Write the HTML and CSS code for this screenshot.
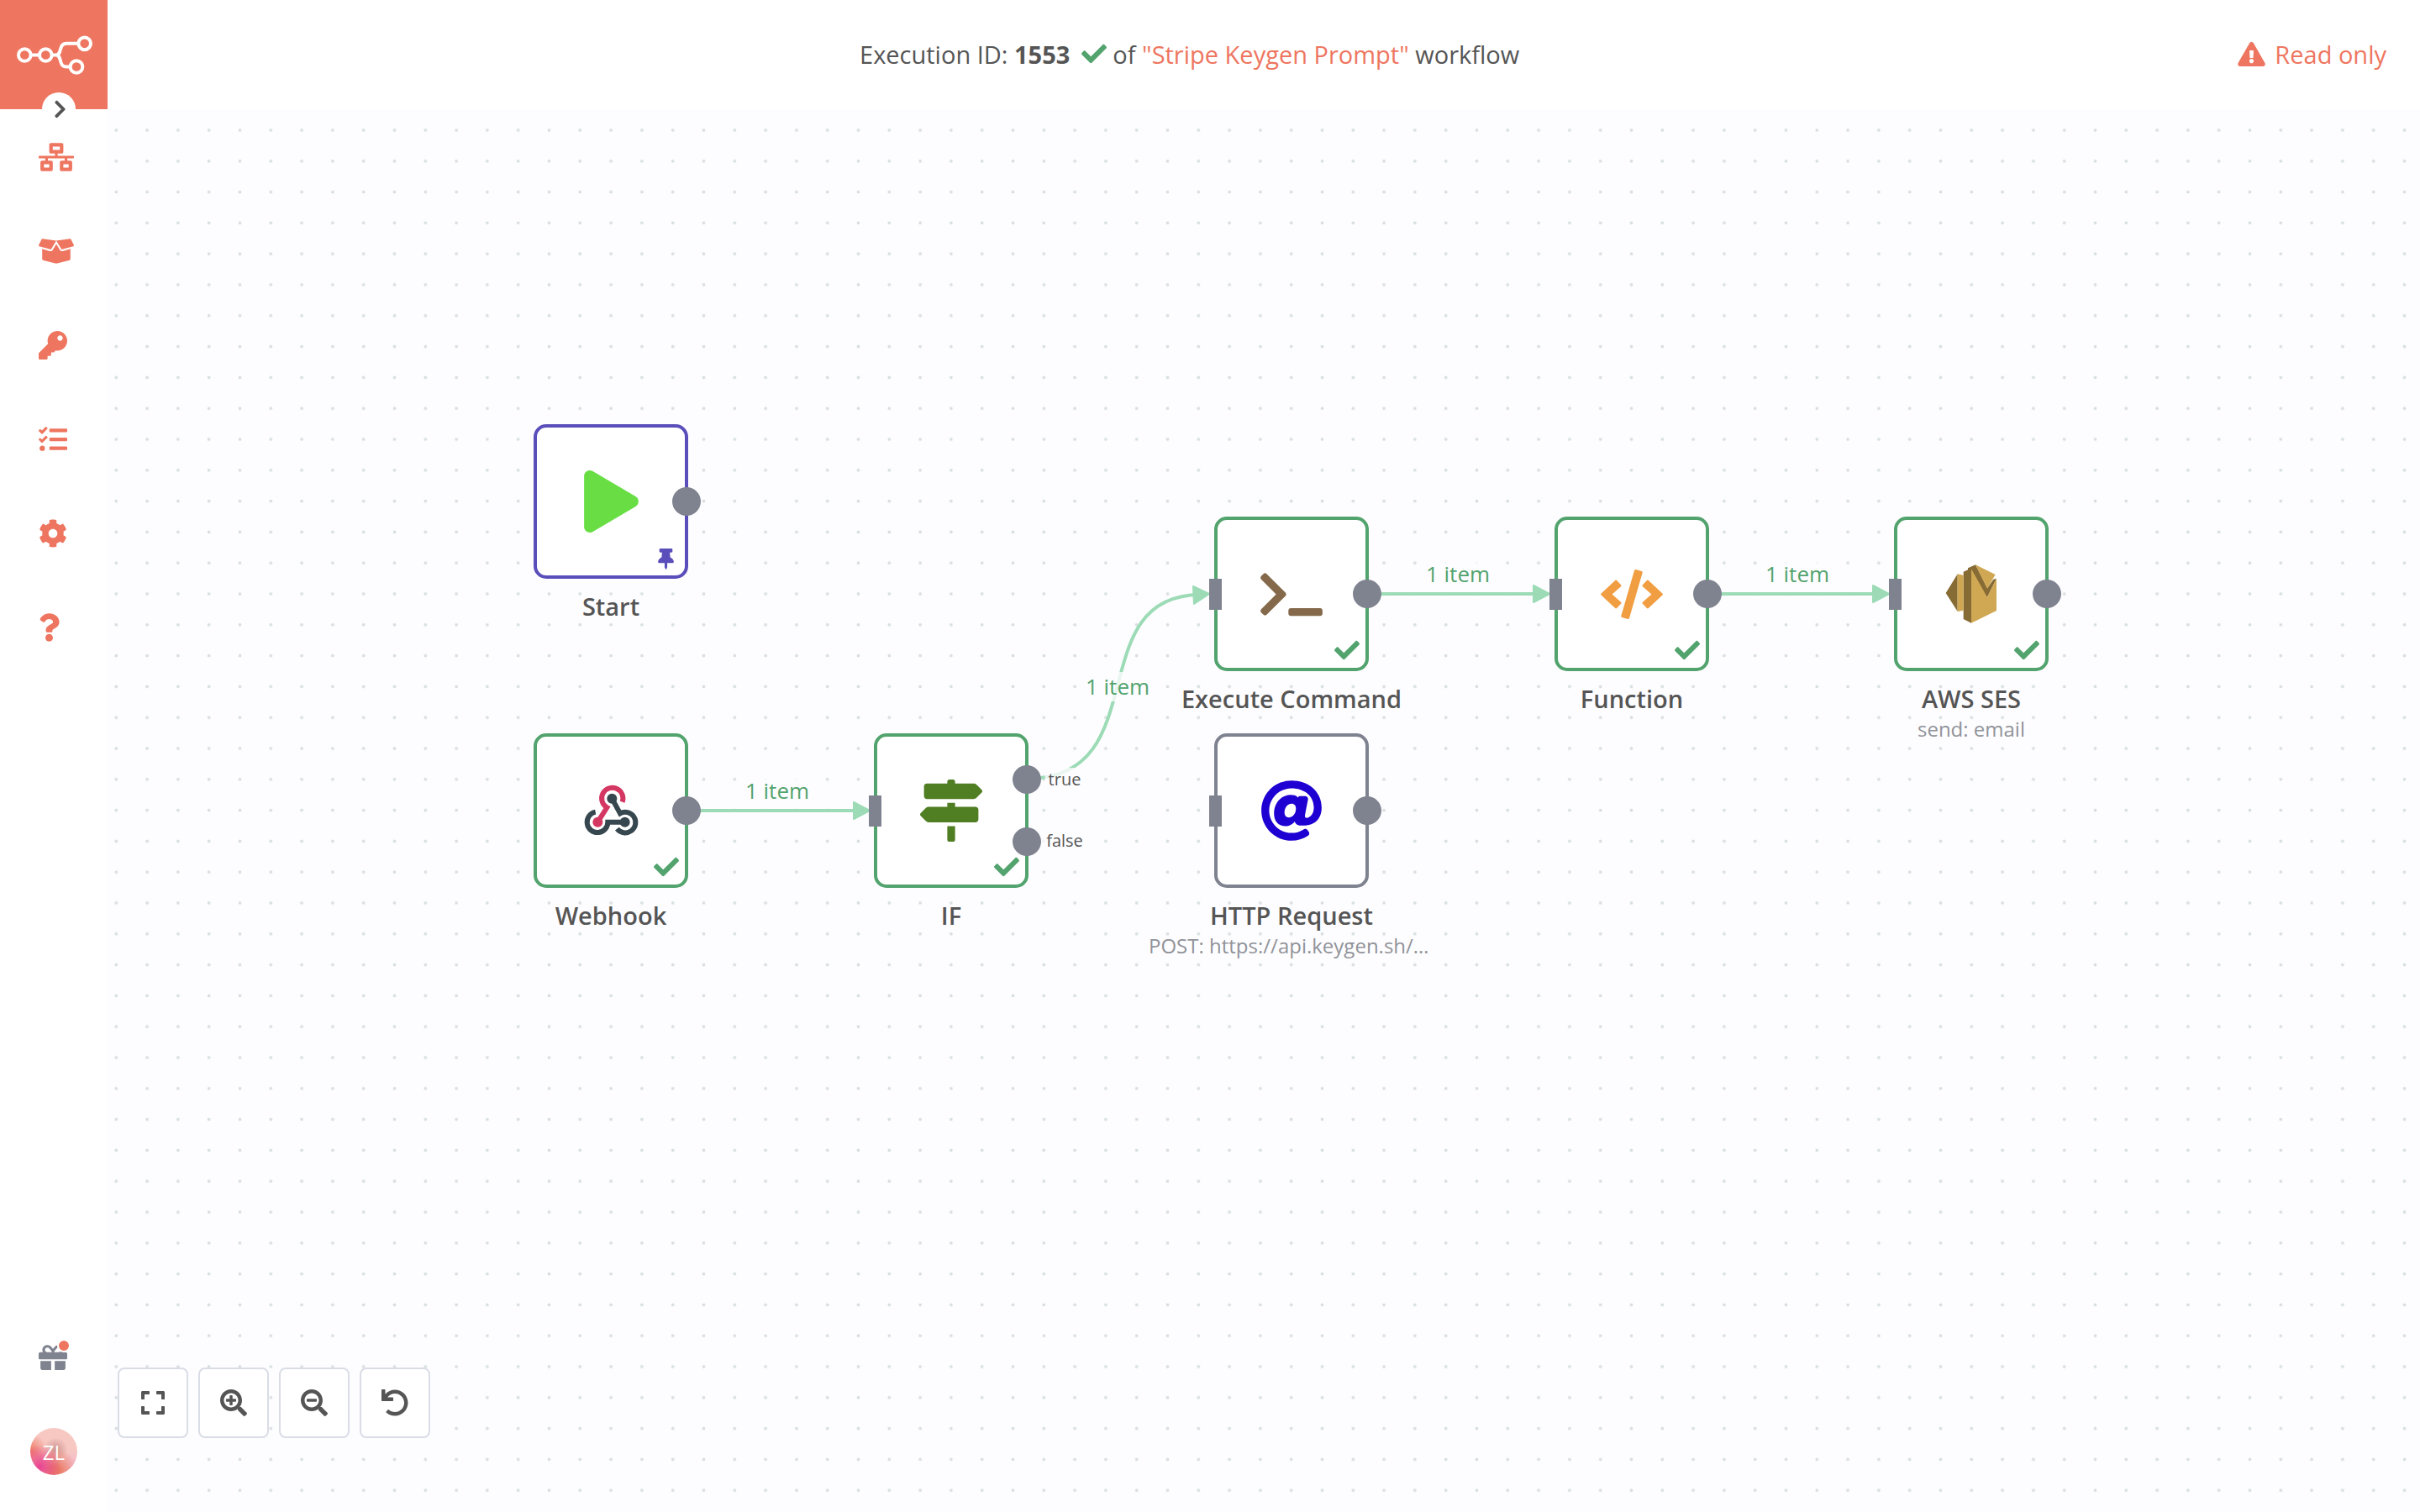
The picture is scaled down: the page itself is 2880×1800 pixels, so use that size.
FILE: index.html
```html
<!DOCTYPE html>
<html lang="en">
<head>
<meta charset="utf-8">
<title>Execution 1553 - Stripe Keygen Prompt</title>
<link rel="stylesheet" href="styles.css">
</head>
<body>
<svg class="sprite" aria-hidden="true">
  <symbol id="check" viewBox="0 0 512 512"><path d="M173.898 439.404l-166.4-166.4c-9.997-9.997-9.997-26.206 0-36.204l36.203-36.204c9.997-9.998 26.207-9.998 36.204 0L192 312.69 432.095 72.596c9.997-9.997 26.207-9.997 36.204 0l36.203 36.204c9.997 9.997 9.997 26.206 0 36.204l-294.4 294.401c-9.998 9.997-26.207 9.997-36.204-.001z"/></symbol>
</svg>

<aside class="sidebar">
  <a class="logo" href="#" aria-label="Home">
    <svg width="90" height="47" viewBox="60 125 270 140" fill="none" stroke="#fff" stroke-width="12">
      <circle cx="88" cy="195" r="22"/><circle cx="163" cy="195" r="22"/><circle cx="302" cy="154" r="22"/><circle cx="273" cy="237" r="22"/>
      <path d="M110 195h31M185 195h14C224 195 206 154 238 154H280M199 195C224 195 206 237 238 237H251"/>
    </svg>
  </a>
  <button class="toggle" type="button" aria-label="Expand menu">
    <svg width="15" height="24" viewBox="0 0 320 512"><path d="M285.476 272.971L91.132 467.314c-9.373 9.373-24.569 9.373-33.941 0l-22.667-22.667c-9.357-9.357-9.375-24.522-.04-33.901L188.505 256 34.484 101.255c-9.335-9.379-9.317-24.544.04-33.901l22.667-22.667c9.373-9.373 24.569-9.373 33.941 0L285.475 239.03c9.373 9.372 9.373 24.568.001 33.941z"/></svg>
  </button>
  <nav class="menu menu-top">
    <a href="#" aria-label="Workflows"><svg width="42" height="34" viewBox="0 0 640 512"><path d="M640 264v-16c0-8.84-7.16-16-16-16H344v-40h72c17.67 0 32-14.33 32-32V32c0-17.67-14.33-32-32-32H224c-17.67 0-32 14.33-32 32v128c0 17.67 14.33 32 32 32h72v40H16c-8.84 0-16 7.16-16 16v16c0 8.84 7.16 16 16 16h104v40H64c-17.67 0-32 14.33-32 32v128c0 17.67 14.33 32 32 32h160c17.67 0 32-14.33 32-32V352c0-17.67-14.33-32-32-32h-56v-40h304v40h-56c-17.67 0-32 14.33-32 32v128c0 17.67 14.33 32 32 32h160c17.67 0 32-14.33 32-32V352c0-17.67-14.33-32-32-32h-56v-40h104c8.84 0 16-7.16 16-16zM256 128V64h128v64H256zm-64 320H96v-64h96v64zm352 0h-96v-64h96v64z"/></svg></a>
    <a href="#" aria-label="Templates"><svg width="42" height="34" viewBox="0 0 640 512"><path d="M425.7 256c-16.9 0-32.8-9-41.4-23.4L320 126l-64.2 106.6c-8.7 14.5-24.6 23.5-41.5 23.5-4.5 0-9-.6-13.3-1.9L64 215v178c0 14.7 10 27.5 24.2 31l216.2 54.1c10.2 2.5 20.9 2.5 31 0L551.8 424c14.2-3.6 24.2-16.4 24.2-31V215l-137 39.1c-4.3 1.3-8.8 1.9-13.3 1.9zm212.6-112.2L586.8 41c-3.1-6.2-9.8-9.8-16.7-8.9L320 64l91.7 152.1c3.8 6.3 11.4 9.3 18.5 7.3l197.9-56.5c9.9-2.9 14.7-13.9 10.2-23.1zM53.2 41L1.7 143.8c-4.6 9.2.3 20.2 10.1 23l197.9 56.5c7.1 2 14.7-1 18.5-7.3L320 64 69.8 32.1c-6.9-.8-13.5 2.7-16.6 8.9z"/></svg></a>
    <a href="#" aria-label="Credentials"><svg width="34" height="34" viewBox="0 0 512 512"><path d="M512 176.001C512 273.203 433.202 352 336 352c-11.22 0-22.19-1.062-32.827-3.069l-24.012 27.014A23.999 23.999 0 0 1 261.223 384H224v40c0 13.255-10.745 24-24 24h-40v40c0 13.255-10.745 24-24 24H24c-13.255 0-24-10.745-24-24v-78.059c0-6.365 2.529-12.47 7.029-16.971l161.802-161.802C163.108 213.814 160 195.271 160 176 160 78.798 238.797.001 335.999 0 433.488-.001 512 78.511 512 176.001zM336 128c0 26.51 21.49 48 48 48s48-21.49 48-48-21.49-48-48-48-48 21.49-48 48z"/></svg></a>
    <a href="#" aria-label="Executions"><svg width="34" height="34" viewBox="0 0 512 512"><path d="M139.61 35.5a12 12 0 0 0-17 0L58.93 98.81l-22.7-22.12a12 12 0 0 0-17 0L3.53 92.41a12 12 0 0 0 0 17l47.59 47.4a12.78 12.78 0 0 0 17.61 0l15.59-15.62L156.52 69a12.09 12.09 0 0 0 .09-17zm0 159.19a12 12 0 0 0-17 0l-63.68 63.72-22.7-22.1a12 12 0 0 0-17 0L3.53 252a12 12 0 0 0 0 17L51 316.5a12.77 12.77 0 0 0 17.6 0l15.7-15.69 72.2-72.22a12 12 0 0 0 .09-16.9zM64 368c-26.49 0-48.59 21.5-48.59 48S37.53 464 64 464a48 48 0 0 0 0-96zm432 16H208a16 16 0 0 0-16 16v32a16 16 0 0 0 16 16h288a16 16 0 0 0 16-16v-32a16 16 0 0 0-16-16zm0-320H208a16 16 0 0 0-16 16v32a16 16 0 0 0 16 16h288a16 16 0 0 0 16-16V80a16 16 0 0 0-16-16zm0 160H208a16 16 0 0 0-16 16v32a16 16 0 0 0 16 16h288a16 16 0 0 0 16-16v-32a16 16 0 0 0-16-16z"/></svg></a>
    <a href="#" aria-label="Settings"><svg width="34" height="34" viewBox="0 0 512 512"><path d="M487.4 315.7l-42.6-24.6c4.3-23.2 4.3-47 0-70.2l42.6-24.6c4.9-2.8 7.1-8.6 5.5-14-11.1-35.6-30-67.8-54.7-94.6-3.8-4.1-10-5.1-14.8-2.3L380.8 110c-17.9-15.4-38.5-27.3-60.8-35.1V25.8c0-5.6-3.9-10.5-9.4-11.7-36.7-8.2-74.3-7.8-109.2 0-5.5 1.2-9.4 6.1-9.4 11.7V75c-22.2 7.9-42.8 19.8-60.8 35.1L88.7 85.5c-4.9-2.8-11-1.9-14.8 2.3-24.7 26.7-43.6 58.9-54.7 94.6-1.7 5.4.6 11.2 5.5 14L67.3 221c-4.3 23.2-4.3 47 0 70.2l-42.6 24.6c-4.9 2.8-7.1 8.6-5.5 14 11.1 35.6 30 67.8 54.7 94.6 3.8 4.1 10 5.1 14.8 2.3l42.6-24.6c17.9 15.4 38.5 27.3 60.8 35.1v49.2c0 5.6 3.9 10.5 9.4 11.7 36.7 8.2 74.3 7.8 109.2 0 5.5-1.2 9.4-6.1 9.4-11.7v-49.2c22.2-7.9 42.8-19.8 60.8-35.1l42.6 24.6c4.9 2.8 11 1.9 14.8-2.3 24.7-26.7 43.6-58.9 54.7-94.6 1.5-5.5-.7-11.3-5.6-14.1zM256 336c-44.1 0-80-35.9-80-80s35.9-80 80-80 80 35.9 80 80-35.9 80-80 80z"/></svg></a>
    <a href="#" aria-label="Help"><svg width="25" height="34" viewBox="0 0 384 512"><path d="M202.021 0C122.202 0 70.503 32.703 29.914 91.026c-7.363 10.58-5.093 25.086 5.178 32.874l43.138 32.709c10.373 7.865 25.132 6.026 33.253-4.148 25.049-31.381 43.63-49.449 82.757-49.449 30.764 0 68.816 19.799 68.816 49.631 0 22.552-18.617 34.134-48.993 51.164-35.423 19.86-82.299 44.576-82.299 106.405V320c0 13.255 10.745 24 24 24h72.471c13.255 0 24-10.745 24-24v-5.773c0-42.86 125.268-44.645 125.268-160.627C377.504 66.256 286.902 0 202.021 0zM192 373.459c-38.196 0-69.271 31.075-69.271 69.271 0 38.195 31.075 69.27 69.271 69.27s69.271-31.075 69.271-69.271-31.075-69.27-69.271-69.27z"/></svg></a>
  </nav>
  <div class="menu menu-bottom">
    <a class="gift" href="#" aria-label="What's new"><span class="gift-icon"><svg width="34" height="34" viewBox="0 0 512 512"><path d="M32 448c0 17.7 14.3 32 32 32h160V320H32v128zm256 32h160c17.7 0 32-14.3 32-32V320H288v160zm192-320h-42.1c6.2-12.1 10.1-25.5 10.1-40 0-48.5-39.5-88-88-88-41.6 0-68.5 21.3-103 68.3-34.5-47-61.4-68.3-103-68.3-48.5 0-88 39.5-88 88 0 14.5 3.8 27.9 10.1 40H32c-17.7 0-32 14.3-32 32v80c0 8.8 7.2 16 16 16h480c8.8 0 16-7.2 16-16v-80c0-17.7-14.3-32-32-32zm-326.1 0c-22.1 0-40-17.9-40-40s17.9-40 40-40c19.9 0 34.6 3.3 86.1 80h-86.1zm206.1 0h-86.1c51.4-76.5 65.7-80 86.1-80 22.1 0 40 17.9 40 40s-17.9 40-40 40z"/></svg><span class="badge"></span></span></a>
    <a class="user" href="#"><span class="avatar">ZL</span></a>
  </div>
</aside>

<div class="page">
  <header class="topbar">
    <h1 class="title"><span>Execution ID: <strong>1553</strong></span><svg class="ok" width="30" height="30"><use href="#check"/></svg><span>of <a href="#">"Stripe Keygen Prompt"</a> workflow</span></h1>
    <span class="readonly"><svg width="33" height="29" viewBox="0 0 576 512"><path d="M569.517 440.013C587.975 472.007 564.806 512 527.94 512H48.054c-36.937 0-59.999-40.055-41.577-71.987L246.423 23.985c18.467-32.009 64.72-31.951 83.154 0l239.94 416.028zM288 354c-25.405 0-46 20.595-46 46s20.595 46 46 46 46-20.595 46-46-20.595-46-46-46zm-43.673-165.346l7.418 136c.347 6.364 5.609 11.346 11.982 11.346h48.546c6.373 0 11.635-4.982 11.982-11.346l7.418-136c.375-6.874-5.098-12.654-11.982-12.654h-63.383c-6.884 0-12.356 5.78-11.981 12.654z"/></svg>Read only</span>
  </header>

  <main class="canvas">
    <svg class="layer" aria-hidden="true">
      <defs>
        <pattern id="dots" width="40" height="40" patternUnits="userSpaceOnUse" patternTransform="translate(-8.1 6.6) scale(.92)"><rect x="18.1" y="18.1" width="3.8" height="3.8" rx="1" fill="#d9dfe0"/></pattern>
      </defs>
      <rect width="100%" height="100%" fill="url(#dots)"/>
      <g fill="none" stroke="#9cdbb6" stroke-width="4">
        <path d="M689 835H892"/>
        <path d="M1499 577H1701"/>
        <path d="M1904 577H2106"/>
        <path d="M1094 797C1249 797 1157 579 1300 578"/>
      </g>
      <g fill="#9cdbb6" stroke="#9cdbb6" stroke-width="2" stroke-linejoin="round">
        <path d="M888 825v20l19-10z"/>
        <path d="M1697 567v20l19-10z"/>
        <path d="M2101 567v20l19-10z"/>
        <path d="M1292 568l1 21 18-12z"/>
      </g>
    </svg>

    <span class="items items-webhook">1 item</span>
    <span class="items items-if">1 item</span>
    <span class="items items-command">1 item</span>
    <span class="items items-function">1 item</span>
    <span class="branch branch-true">true</span>
    <span class="branch branch-false">false</span>

    <section class="node node-start">
      <div class="box pinned">
        <svg width="65" height="74" viewBox="0 0 448 512" fill="#68de44"><path d="M424.4 214.7L72.4 6.6C43.8-10.3 0 6.1 0 47.9V464c0 37.5 40.7 60.1 72.4 41.3l352-208c31.4-18.5 31.5-64.1 0-82.6z"/></svg>
        <svg class="pin" width="19" height="25" viewBox="0 0 384 512"><path d="M298.028 214.267L285.793 96H328c13.255 0 24-10.745 24-24V24c0-13.255-10.745-24-24-24H56C42.745 0 32 10.745 32 24v48c0 13.255 10.745 24 24 24h42.207L85.972 214.267C37.465 236.82 0 277.261 0 328c0 13.255 10.745 24 24 24h136v104.007c0 1.242.289 2.467.845 3.578l24 48c2.941 5.882 11.364 5.893 14.311 0l24-48a8.008 8.008 0 0 0 .845-3.578V352h136c13.255 0 24-10.745 24-24-.001-51.167-37.983-91.42-85.973-113.733z"/></svg>
        <i class="out"></i>
      </div>
      <h2>Start</h2>
    </section>

    <section class="node node-webhook">
      <div class="box done">
        <svg width="74" height="74" viewBox="270 235 222 222" fill="none" stroke-width="18">
          <g stroke="#37474f"><path d="M326 351A37 37 0 1 0 370 387H431"/><path d="M385 303L414 356A37 37 0 1 1 403 411"/></g>
          <path stroke="#d53763" d="M422 315A38 38 0 1 0 367 335L334 387"/>
          <g fill="#37474f"><circle cx="385" cy="303" r="18"/><circle cx="431" cy="387" r="18"/></g><circle cx="334" cy="387" r="18" fill="#d53763"/>
        </svg>
        <svg class="tick" width="30" height="30"><use href="#check"/></svg>
        <i class="out"></i>
      </div>
      <h2>Webhook</h2>
    </section>

    <section class="node node-if">
      <div class="box done">
        <svg width="74" height="74" viewBox="0 0 512 512" fill="#507e23"><path d="M507.31 84.69L464 41.37c-6-6-14.14-9.37-22.63-9.37H288V16c0-8.84-7.16-16-16-16h-32c-8.84 0-16 7.16-16 16v16H56c-13.25 0-24 10.75-24 24v80c0 13.25 10.75 24 24 24h385.37c8.49 0 16.62-3.37 22.63-9.37l43.31-43.31c6.25-6.26 6.25-16.38 0-22.63zM224 496c0 8.84 7.16 16 16 16h32c8.84 0 16-7.16 16-16V384h-64v112zm232-272H288v-32h-64v32H70.63c-8.49 0-16.62 3.37-22.63 9.37L4.69 276.69c-6.25 6.25-6.25 16.38 0 22.63L48 342.63c6 6 14.14 9.37 22.63 9.37H456c13.25 0 24-10.75 24-24v-80c0-13.25-10.75-24-24-24z"/></svg>
        <svg class="tick" width="30" height="30"><use href="#check"/></svg>
        <i class="in"></i><i class="out out-upper"></i><i class="out out-lower"></i>
      </div>
      <h2>IF</h2>
    </section>

    <section class="node node-command">
      <div class="box done">
        <svg width="74" height="59" viewBox="0 0 640 512" fill="#84694a"><path d="M257.981 272.971L63.638 467.314c-9.373 9.373-24.569 9.373-33.941 0L7.029 444.647c-9.357-9.357-9.375-24.522-.04-33.901L161.011 256 6.99 101.255c-9.335-9.379-9.317-24.544.04-33.901l22.667-22.667c9.373-9.373 24.569-9.373 33.941 0L257.981 239.03c9.373 9.372 9.373 24.568 0 33.941zM640 456v-32c0-13.255-10.745-24-24-24H312c-13.255 0-24 10.745-24 24v32c0 13.255 10.745 24 24 24h304c13.255 0 24-10.745 24-24z"/></svg>
        <svg class="tick" width="30" height="30"><use href="#check"/></svg>
        <i class="in"></i><i class="out"></i>
      </div>
      <h2>Execute Command</h2>
    </section>

    <section class="node node-http">
      <div class="box">
        <svg width="74" height="74" viewBox="0 0 512 512" fill="#1f00d2"><path d="M256 8C118.941 8 8 118.919 8 256c0 137.059 110.919 248 248 248 48.154 0 95.342-14.14 135.408-40.223 12.005-7.815 14.625-24.288 5.552-35.372l-10.177-12.433c-7.671-9.371-21.179-11.667-31.373-5.129C325.92 429.757 291.314 440 256 440c-101.458 0-184-82.542-184-184S154.542 72 256 72c100.139 0 184 57.619 184 160 0 38.786-21.093 79.742-58.17 83.693-17.349-.454-16.91-12.857-13.476-30.024l23.433-121.11C394.653 149.75 383.308 136 368.225 136h-44.981a13.518 13.518 0 0 0-13.432 11.993l-.01.092c-14.697-17.901-40.448-21.775-59.971-21.775-74.58 0-137.831 62.234-137.831 151.46 0 65.303 36.785 105.87 96 105.87 26.984 0 57.369-15.637 74.991-38.333 9.522 34.104 40.613 34.104 70.71 34.104C462.609 379.41 504 307.798 504 232 504 95.653 394.023 8 256 8zm-21.68 304.43c-22.249 0-36.07-15.623-36.07-40.771 0-44.993 30.779-72.729 58.63-72.729 22.292 0 35.601 15.241 35.601 40.77 0 45.061-33.875 72.73-58.161 72.73z"/></svg>
        <i class="in"></i><i class="out"></i>
      </div>
      <h2>HTTP Request</h2>
      <p class="clipped">POST: https://api.keygen.sh/…</p>
    </section>

    <section class="node node-function">
      <div class="box done">
        <svg width="74" height="59" viewBox="0 0 640 512" fill="#f19e43"><path d="M278.9 511.5l-61-17.7c-6.4-1.8-10-8.5-8.2-14.9L346.2 8.7c1.8-6.4 8.5-10 14.9-8.2l61 17.7c6.4 1.8 10 8.5 8.2 14.9L293.8 503.3c-1.9 6.4-8.5 10.1-14.9 8.2zm-114-112.2l43.5-46.4c4.6-4.9 4.3-12.7-.8-17.2L117 256l90.6-79.7c5.1-4.5 5.5-12.3.8-17.2l-43.5-46.4c-4.5-4.8-12.1-5.1-17-.5L3.8 247.2c-5.1 4.7-5.1 12.8 0 17.5l144.1 135.1c4.9 4.6 12.5 4.4 17-.5zm327.2.6l144.1-135.1c5.1-4.7 5.1-12.8 0-17.5L492.1 112.1c-4.8-4.5-12.4-4.3-17 .5L431.6 159c-4.6 4.9-4.3 12.7.8 17.2L523 256l-90.6 79.7c-5.1 4.5-5.5 12.3-.8 17.2l43.5 46.4c4.5 4.9 12.1 5.1 17 .6z"/></svg>
        <svg class="tick" width="30" height="30"><use href="#check"/></svg>
        <i class="in"></i><i class="out"></i>
      </div>
      <h2>Function</h2>
    </section>

    <section class="node node-ses">
      <div class="box done">
        <svg width="74" height="74" viewBox="629 212 222 222">
          <path fill="#876b35" d="M649 320L691 252V386zM712 244L728 237V231L755 219L797 303L819 271L830 268L797 335L760 300L740 427L712 413z"/>
          <path fill="#d0a854" d="M691 252L712 256V382L691 386zM740 234L797 335L830 268V383L740 427zM755 219L826 254L797 304z"/>
        </svg>
        <svg class="tick" width="30" height="30"><use href="#check"/></svg>
        <i class="in"></i><i class="out"></i>
      </div>
      <h2>AWS SES</h2>
      <p>send: email</p>
    </section>

    <div class="zoom">
      <button type="button" aria-label="Zoom to fit"><svg width="28" height="32" viewBox="0 0 448 512"><path d="M0 180V56c0-13.3 10.7-24 24-24h124c6.6 0 12 5.4 12 12v40c0 6.6-5.4 12-12 12H64v84c0 6.6-5.4 12-12 12H12c-6.6 0-12-5.4-12-12zM288 44v40c0 6.6 5.4 12 12 12h84v84c0 6.6 5.4 12 12 12h40c6.6 0 12-5.4 12-12V56c0-13.3-10.7-24-24-24H300c-6.6 0-12 5.4-12 12zm148 276h-40c-6.6 0-12 5.4-12 12v84h-84c-6.6 0-12 5.4-12 12v40c0 6.6 5.4 12 12 12h124c13.3 0 24-10.7 24-24V332c0-6.6-5.4-12-12-12zM160 468v-40c0-6.6-5.4-12-12-12H64v-84c0-6.6-5.4-12-12-12H12c-6.6 0-12 5.4-12 12v124c0 13.3 10.7 24 24 24h124c6.6 0 12-5.4 12-12z"/></svg></button>
      <button type="button" aria-label="Zoom in"><svg width="32" height="32" viewBox="0 0 512 512"><path d="M304 192v32c0 6.6-5.4 12-12 12h-56v56c0 6.6-5.4 12-12 12h-32c-6.6 0-12-5.4-12-12v-56h-56c-6.6 0-12-5.4-12-12v-32c0-6.6 5.4-12 12-12h56v-56c0-6.6 5.4-12 12-12h32c6.6 0 12 5.4 12 12v56h56c6.6 0 12 5.4 12 12zm201 284.7L476.7 505c-9.4 9.4-24.6 9.4-33.9 0L343 405.3c-4.5-4.5-7-10.6-7-17V372c-35.3 27.6-79.7 44-128 44C93.1 416 0 322.9 0 208S93.1 0 208 0s208 93.1 208 208c0 48.3-16.4 92.7-44 128h16.3c6.4 0 12.5 2.5 17 7l99.7 99.7c9.3 9.4 9.3 24.6 0 34zM344 208c0-75.2-60.8-136-136-136S72 132.8 72 208s60.8 136 136 136 136-60.8 136-136z"/></svg></button>
      <button type="button" aria-label="Zoom out"><svg width="32" height="32" viewBox="0 0 512 512"><path d="M304 192v32c0 6.6-5.4 12-12 12H124c-6.6 0-12-5.4-12-12v-32c0-6.6 5.4-12 12-12h168c6.6 0 12 5.4 12 12zm201 284.7L476.7 505c-9.4 9.4-24.6 9.4-33.9 0L343 405.3c-4.5-4.5-7-10.6-7-17V372c-35.3 27.6-79.7 44-128 44C93.1 416 0 322.9 0 208S93.1 0 208 0s208 93.1 208 208c0 48.3-16.4 92.7-44 128h16.3c6.4 0 12.5 2.5 17 7l99.7 99.7c9.3 9.4 9.3 24.6 0 34zM344 208c0-75.2-60.8-136-136-136S72 132.8 72 208s60.8 136 136 136 136-60.8 136-136z"/></svg></button>
      <button type="button" aria-label="Reset zoom"><svg width="32" height="32" viewBox="0 0 512 512"><path d="M212.333 224.333H12c-6.627 0-12-5.373-12-12V12C0 5.373 5.373 0 12 0h48c6.627 0 12 5.373 12 12v78.112C117.773 39.279 184.26 7.47 258.175 8.007c136.906.994 246.448 111.623 246.157 248.532C504.041 393.258 393.12 504 256.333 504c-64.089 0-122.496-24.313-166.51-64.215-5.099-4.622-5.334-12.554-.467-17.42l33.967-33.967c4.474-4.474 11.662-4.717 16.401-.525C170.76 415.336 211.58 432 256.333 432c97.268 0 176-78.716 176-176 0-97.267-78.716-176-176-176-58.496 0-110.28 28.476-142.274 72.333h98.274c6.627 0 12 5.373 12 12v48c0 6.627-5.373 12-12 12z"/></svg></button>
    </div>
  </main>
</div>
</body>
</html>
```
FILE: styles.css
```css
:root {
  --coral: #ee7660;
  --green: #52a36d;
  --gray: #7f838f;
  --purple: #5a4ebb;
  --text: #555;
}

* {
  box-sizing: border-box;
}

body {
  margin: 0;
  min-height: 100vh;
  display: grid;
  grid-template-columns: 128px 1fr;
  font-family: "Open Sans", sans-serif;
  color: var(--text);
  background: #fff;
}

svg {
  display: block;
  fill: currentColor;
}

svg[fill="none"] {
  fill: none;
}

.sprite {
  position: absolute;
  width: 0;
  height: 0;
}

a {
  color: var(--coral);
  text-decoration: none;
}

button {
  padding: 0;
  border: 0;
  background: #fff;
  color: var(--text);
  display: flex;
  align-items: center;
  justify-content: center;
}

/* Sidebar */
.sidebar {
  position: relative;
  display: flex;
  flex-direction: column;
}

.logo {
  height: 130px;
  display: flex;
  align-items: center;
  padding-left: 20px;
  background: var(--coral);
}

.toggle {
  position: absolute;
  left: 50px;
  top: 110px;
  width: 40px;
  height: 40px;
  padding-left: 3px;
  border-radius: 50%;
}

.menu a {
  height: 112px;
  display: flex;
  align-items: center;
  padding-left: 46px;
}

.menu-top {
  padding-top: 1px;
}

.menu-bottom {
  margin-top: auto;
  padding-bottom: 16px;
}

.menu .gift {
  color: var(--gray);
}

.gift-icon {
  position: relative;
}

.badge {
  position: absolute;
  right: -4px;
  top: -5px;
  width: 16px;
  height: 16px;
  border: 2px solid #fff;
  border-radius: 50%;
  background: var(--coral);
}

.menu .user {
  padding-left: 36px;
}

.avatar {
  width: 56px;
  height: 56px;
  border-radius: 50%;
  display: flex;
  align-items: center;
  justify-content: center;
  font-size: 24px;
  color: #fff;
  background:
    radial-gradient(circle at 20% 82%, #e84393 0, #e8439300 40%),
    radial-gradient(circle at 52% 92%, #ea7a66 10%, #ea7a6600 46%),
    radial-gradient(circle at 0 50%, #ee7660 0, #ee766000 34%),
    radial-gradient(circle at 96% 84%, #f2b4cc 0, #f2b4cc00 30%),
    radial-gradient(circle at 54% 46%, #cf9490 0, #f7c8c2 34%);
}

/* Header */
.page {
  display: flex;
  flex-direction: column;
}

.topbar {
  height: 130px;
  display: flex;
  align-items: center;
  padding: 0 40px 2px;
  font-size: 29px;
}

.title {
  flex: 1;
  margin: 0;
  display: flex;
  align-items: center;
  justify-content: center;
  font-size: inherit;
  font-weight: 400;
}

.ok {
  margin: 0 7px 0 14px;
  color: var(--green);
}

.readonly {
  display: flex;
  align-items: center;
  gap: 11px;
  color: var(--coral);
}

/* Canvas */
.canvas {
  position: relative;
  flex: 1;
  overflow: hidden;
  background: #fdfdff;
}

.layer {
  position: absolute;
  inset: 0;
  width: 100%;
  height: 100%;
}

.items,
.branch {
  position: absolute;
  transform: translateX(-50%);
  padding: 0 4px;
  white-space: nowrap;
  background: #fdfdffcc;
}

.items {
  font-size: 26px;
  line-height: 35px;
  color: var(--green);
}

.branch {
  font-size: 20px;
  line-height: 27px;
}

.items-webhook { left: 797px; top: 794px; }
.items-if { left: 1202px; top: 670px; }
.items-command { left: 1607px; top: 536px; }
.items-function { left: 2011px; top: 536px; }
.branch-true { left: 1139px; top: 784px; }
.branch-false { left: 1139px; top: 857px; }

.node {
  position: absolute;
  width: 340px;
  display: flex;
  flex-direction: column;
  align-items: center;
  text-align: center;
}

.node-start { left: 429px; top: 375px; }
.node-webhook { left: 429px; top: 743px; }
.node-if { left: 834px; top: 743px; }
.node-command { left: 1239px; top: 485px; }
.node-http { left: 1239px; top: 743px; }
.node-function { left: 1644px; top: 485px; }
.node-ses { left: 2048px; top: 485px; }

.box {
  position: relative;
  width: 184px;
  height: 184px;
  display: flex;
  align-items: center;
  justify-content: center;
  border: 4px solid var(--gray);
  border-radius: 15px;
  background: #fff;
}

.box > svg[fill]:not([fill="none"]) {
  fill: revert-layer;
}

.done {
  border-color: var(--green);
}

.pinned {
  border-color: var(--purple);
}

.tick {
  position: absolute;
  right: 7px;
  bottom: 6px;
  color: var(--green);
}

.pin {
  position: absolute;
  right: 13px;
  bottom: 7px;
  color: var(--purple);
}

.in,
.out {
  position: absolute;
  background: var(--gray);
}

.in {
  left: -10px;
  top: 70px;
  width: 15px;
  height: 37px;
}

.out {
  right: -19px;
  top: 71px;
  width: 34px;
  height: 34px;
  border-radius: 50%;
}

.out-upper { top: 34px; }
.out-lower { top: 108px; }

.node h2 {
  margin: 13px 0 0;
  font-size: 29px;
  line-height: 40px;
  font-weight: 600;
}

.node p {
  margin: 0;
  width: 100%;
  font-size: 24px;
  line-height: 32px;
  color: #919399;
}

.node .clipped {
  text-align: left;
}

/* Zoom controls */
.zoom {
  position: absolute;
  left: 12px;
  bottom: 88px;
  display: flex;
  gap: 12px;
}

.zoom button {
  width: 84px;
  height: 84px;
  border: 2px solid #dadde6;
  border-radius: 8px;
}
```
